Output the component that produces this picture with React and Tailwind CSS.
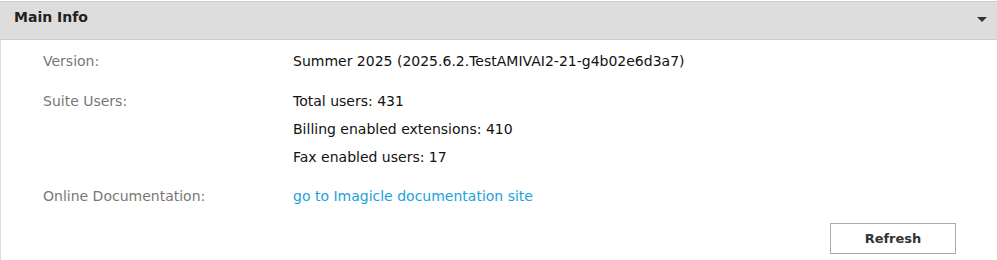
import React from 'react';

const rows = [
  { label: 'Version:', values: ['Summer 2025 (2025.6.2.TestAMIVAI2-21-g4b02e6d3a7)'] },
  { label: 'Suite Users:', values: ['Total users: 431', 'Billing enabled extensions: 410', 'Fax enabled users: 17'] },
];

export default function App() {
  return (
    <div className="w-[997px] h-[260px] bg-white text-[14px] font-['DejaVu_Sans',sans-serif]">
      {/* Header */}
      <div className="mt-px h-[39px] flex items-center justify-between bg-[#dddddd] border-t border-b border-[#cccccc] pl-[14px] pr-[10px]">
        <span className="font-bold text-[14px] text-[#222222] pb-[6px]">Main Info</span>
        <svg width="10" height="6" viewBox="0 0 10 6" className="mb-[2px]">
          <path d="M0 0 H10 L5 5 Z" fill="#333333" />
        </svg>
      </div>

      {/* Body */}
      <div className="border-l border-[#dddddd] h-[220px] pl-[42px] pr-[41px] pt-[13px]">
        {rows.map(row => (
          <div key={row.label} className="flex mb-[24px]">
            <div className="w-[250px] text-[#777777] leading-[16px]">{row.label}</div>
            <div className="flex flex-col gap-[12px] text-[#111111] leading-[16px]">
              {row.values.map(v => (
                <div key={v}>{v}</div>
              ))}
            </div>
          </div>
        ))}
        <div className="flex -mt-px">
          <div className="w-[250px] text-[#777777] leading-[16px]">Online Documentation:</div>
          <a href="#" className="text-[#1ca1db] leading-[16px]">go to Imagicle documentation site</a>
        </div>
        <div className="flex justify-end mt-[19px]">
          <button className="w-[126px] h-[31px] border border-[#aaaaaa] bg-white font-bold text-[13px] text-[#333333]">
            Refresh
          </button>
        </div>
      </div>
    </div>
  );
}
